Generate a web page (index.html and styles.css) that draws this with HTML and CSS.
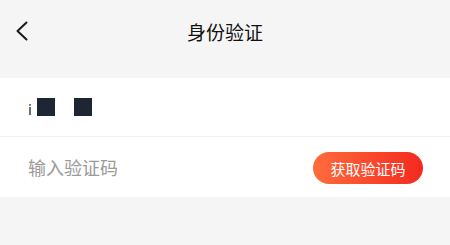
FILE: index.html
```html
<!DOCTYPE html>
<html lang="zh-CN">
<head>
<meta charset="utf-8">
<link rel="stylesheet" href="styles.css">
</head>
<body>
<header class="nav">
  <div class="nav-left">
    <svg class="back" width="14" height="20" viewBox="0 0 14 20"><path d="M11.5 1.5 L2.5 10 L11.5 18.5" fill="none" stroke="#1a1a1a" stroke-width="2" stroke-linecap="round" stroke-linejoin="round"/></svg>
  </div>
  <h1 class="title">身份验证</h1>
  <div class="nav-right"></div>
</header>
<main class="card">
  <div class="row phone">
    <span class="tiny">i</span>
    <span class="box"></span>
    <span class="box"></span>
  </div>
  <div class="row code">
    <span class="placeholder">输入验证码</span>
    <button class="btn">获取验证码</button>
  </div>
</main>
</body>
</html>
```
FILE: styles.css
```css
html, body {
  margin: 0;
  padding: 0;
  background: #f5f5f5;
  font-family: "Noto Sans CJK SC", "Noto Sans", sans-serif;
}
.nav {
  height: 62px;
  display: grid;
  grid-template-columns: 1fr auto 1fr;
  align-items: center;
}
.nav-left {
  padding-left: 15px;
  display: flex;
  align-items: center;
}
.back { display: block; }
.title {
  margin: 0;
  font-size: 19px;
  font-weight: 400;
  color: #111;
  line-height: 1;
}
.card {
  margin-top: 16px;
  background: #fff;
}
.row {
  display: flex;
  align-items: center;
  padding: 0 27px 0 28px;
}
.phone {
  height: 58px;
  border-bottom: 1px solid #efefef;
  gap: 0;
}
.tiny {
  font-size: 14px;
  line-height: 1;
  color: #222;
  width: 9px;
  margin-top: 5px;
  font-family: "DejaVu Sans", sans-serif;
}
.box {
  width: 18px;
  height: 18px;
  background: #1f2633;
  margin-right: 19px;
}
.code {
  height: 60px;
  justify-content: space-between;
}
.placeholder {
  font-size: 18px;
  color: #9a9a9a;
}
.btn {
  width: 110px;
  height: 32px;
  border: none;
  border-radius: 16px;
  background: linear-gradient(90deg, #ff6c3c 0%, #f4291f 100%);
  color: #fff;
  font-family: "Noto Sans CJK SC", sans-serif;
  font-size: 15px;
  padding: 0;
  margin-top: 2px;
}
```
